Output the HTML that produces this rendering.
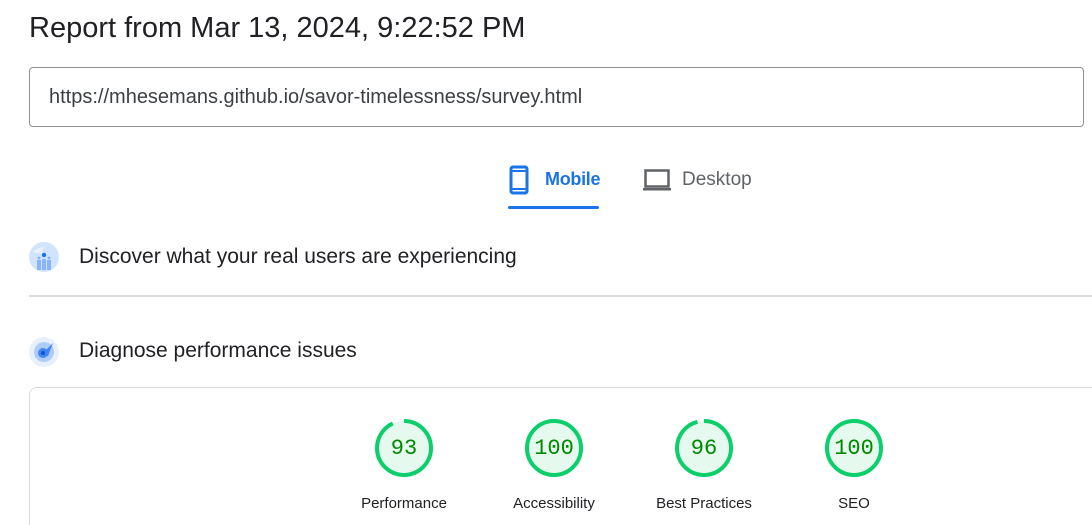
<!DOCTYPE html><html><head><style>
html,body{margin:0;width:1092px;height:525px;overflow:hidden}
body{background:#fff;font-family:"Liberation Sans",Arial,sans-serif;color:#202124;position:relative}
.a{position:absolute;white-space:nowrap}
.g{position:absolute;top:418px;width:60px;height:60px}
.g span{position:absolute;left:0;top:1px;width:60px;line-height:60px;text-align:center;font-family:"Liberation Mono",monospace;font-size:22px;color:#008800}
.l{position:absolute;top:495px;width:160px;text-align:center;font-size:15px;color:#202124}
</style></head><body>
<div class="a" style="left:29px;top:12px;font-size:29px;color:#202124">Report from Mar 13, 2024, 9:22:52 PM</div>
<div class="a" style="left:29px;top:67px;width:1053px;height:58px;border:1px solid #8f9398;border-radius:4px"></div>
<div class="a" style="left:49px;top:86px;font-size:20px;color:#3c4043">https://mhesemans.github.io/savor-timelessness/survey.html</div>
<svg class="a" style="left:508px;top:165px" width="22" height="30" viewBox="0 0 22 30"><rect x="3" y="2" width="16" height="26" rx="2" fill="none" stroke="#1a73e8" stroke-width="3"/><line x1="3" y1="6" x2="19" y2="6" stroke="#1a73e8" stroke-width="2"/><line x1="3" y1="24" x2="19" y2="24" stroke="#1a73e8" stroke-width="2"/></svg>
<div class="a" style="left:545px;top:169px;font-size:18px;color:#1a73e8;font-weight:bold;letter-spacing:-0.3px">Mobile</div>
<div class="a" style="left:508px;top:206px;width:91px;height:3px;background:#1a73e8;border-radius:2px"></div>
<svg class="a" style="left:642px;top:167px" width="30" height="26" viewBox="0 0 30 26"><rect x="3.5" y="3.5" width="23" height="16" fill="none" stroke="#5f6368" stroke-width="2.5"/><rect x="1" y="21" width="28" height="2.5" fill="#5f6368"/></svg>
<div class="a" style="left:682px;top:169px;font-size:19px;color:#5f6368">Desktop</div>
<svg class="a" style="left:29px;top:242px" width="30" height="30" viewBox="0 0 30 30"><circle cx="15" cy="15" r="15" fill="#d2e3fc"/><path d="M4 10 Q10 4 16 5 Q12 9 14 11 Q8 12 4 10Z" fill="#e8f0fe"/><circle cx="15" cy="13" r="2.2" fill="#1a73e8"/><rect x="8" y="18" width="4" height="10" fill="#8ab4f8"/><rect x="13" y="17" width="4" height="11" fill="#8ab4f8"/><rect x="18" y="18" width="4" height="10" fill="#8ab4f8"/><circle cx="10" cy="16" r="1.5" fill="#8ab4f8"/><circle cx="20" cy="16" r="1.5" fill="#8ab4f8"/></svg>
<div class="a" style="left:79px;top:245px;font-size:21px">Discover what your real users are experiencing</div>
<div class="a" style="left:29px;top:295px;width:1063px;height:2px;background:#dadce0"></div>
<svg class="a" style="left:29px;top:337px" width="30" height="30" viewBox="0 0 30 30"><circle cx="15" cy="15" r="15" fill="#e8f0fe"/><circle cx="15" cy="15" r="10" fill="#aecbfa"/><path d="M11 19 L24 6 L19 19 Z" fill="#4285f4"/><circle cx="14" cy="16" r="5" fill="#4285f4"/><circle cx="14" cy="16" r="2" fill="#0b57d0"/></svg>
<div class="a" style="left:79px;top:339px;font-size:21px">Diagnose performance issues</div>
<div class="a" style="left:29px;top:387px;width:1080px;height:160px;border:1px solid #dadce0;border-radius:8px"></div>
<svg class="g" style="left:374px" viewBox="0 0 60 60"><circle cx="30" cy="30" r="27" fill="#e6f9ee"/><circle cx="30" cy="30" r="27" fill="none" stroke="#0cce6b" stroke-width="4" stroke-dasharray="157.8 169.6" transform="rotate(-90 30 30)"/></svg><div class="g" style="left:374px"><span>93</span></div>
<svg class="g" style="left:524px" viewBox="0 0 60 60"><circle cx="30" cy="30" r="27" fill="#e6f9ee" stroke="#0cce6b" stroke-width="4"/></svg><div class="g" style="left:524px"><span>100</span></div>
<svg class="g" style="left:674px" viewBox="0 0 60 60"><circle cx="30" cy="30" r="27" fill="#e6f9ee"/><circle cx="30" cy="30" r="27" fill="none" stroke="#0cce6b" stroke-width="4" stroke-dasharray="162.8 169.6" transform="rotate(-90 30 30)"/></svg><div class="g" style="left:674px"><span>96</span></div>
<svg class="g" style="left:824px" viewBox="0 0 60 60"><circle cx="30" cy="30" r="27" fill="#e6f9ee" stroke="#0cce6b" stroke-width="4"/></svg><div class="g" style="left:824px"><span>100</span></div>
<div class="l" style="left:324px">Performance</div>
<div class="l" style="left:474px">Accessibility</div>
<div class="l" style="left:624px">Best Practices</div>
<div class="l" style="left:774px">SEO</div>
</body></html>
